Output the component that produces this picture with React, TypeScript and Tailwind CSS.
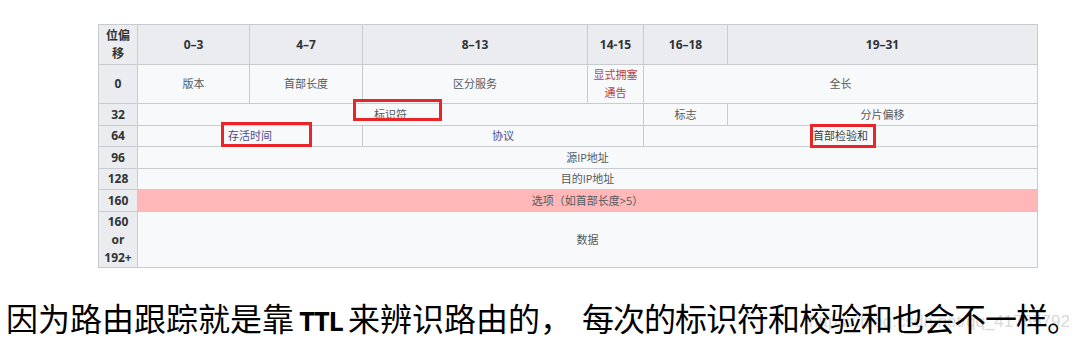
import React from 'react';

const cell = 'border border-[#c8ccd1] bg-[#f8f9fa] text-center align-middle p-0 text-[11px] leading-[18px] text-[#54595d]';
const head = 'border border-[#c8ccd1] bg-[#eaecf0] text-center align-middle p-0 text-[12px] leading-[18px] font-bold text-[#303336]';

const App: React.FC = () => {
  return (
    <div className="relative w-[1074px] h-[344px] bg-white overflow-hidden font-['Open_Sans','Noto_Sans_CJK_SC',sans-serif]">
      {/* IP header table */}
      <div className="pt-[24px] pl-[98px]">
        <table className="table-fixed border-collapse w-[939px]">
          <colgroup>
            <col className="w-[39px]" />
            <col className="w-[112px]" />
            <col className="w-[113px]" />
            <col className="w-[225px]" />
            <col className="w-[56px]" />
            <col className="w-[84px]" />
            <col className="w-[310px]" />
          </colgroup>
          <tbody>
            <tr className="h-[40px]">
              <th className={head}>
                位偏
                <br />
                移
              </th>
              <th className={head}>0–3</th>
              <th className={head}>4–7</th>
              <th className={head}>8–13</th>
              <th className={head}>14-15</th>
              <th className={head}>16–18</th>
              <th className={head}>19–31</th>
            </tr>
            <tr className="h-[39px]">
              <th className={head}>0</th>
              <td className={cell}>版本</td>
              <td className={cell}>首部长度</td>
              <td className={cell}>区分服务</td>
              <td className={`${cell} !text-[#b54545]`}>
                显式拥塞
                <br />
                通告
              </td>
              <td className={cell} colSpan={2}>全长</td>
            </tr>
            <tr className="h-[22px]">
              <th className={head}>32</th>
              <td className={cell} colSpan={4}>标识符</td>
              <td className={cell}>标志</td>
              <td className={cell}>分片偏移</td>
            </tr>
            <tr className="h-[21px]">
              <th className={head}>64</th>
              <td className={`${cell} !text-[#4e4a8e]`} colSpan={2}>存活时间</td>
              <td className={`${cell} !text-[#4e4a8e]`} colSpan={2}>协议</td>
              <td className={`${cell} !text-[#3a3d40]`} colSpan={2}>首部检验和</td>
            </tr>
            <tr className="h-[22px]">
              <th className={head}>96</th>
              <td className={cell} colSpan={6}>源IP地址</td>
            </tr>
            <tr className="h-[21px]">
              <th className={head}>128</th>
              <td className={cell} colSpan={6}>目的IP地址</td>
            </tr>
            <tr className="h-[22px]">
              <th className={head}>160</th>
              <td className={`${cell} !bg-[#ffb7b8]`} colSpan={6}>选项（如首部长度&gt;5）</td>
            </tr>
            <tr className="h-[56px]">
              <th className={head}>
                160
                <br />
                or
                <br />
                192+
              </th>
              <td className={cell} colSpan={6}>数据</td>
            </tr>
          </tbody>
        </table>
      </div>

      {/* red highlight boxes */}
      <div className="absolute left-[353px] top-[99px] w-[89px] h-[22px] border-[3px] border-[#e8262a]" />
      <div className="absolute left-[221px] top-[122px] w-[91px] h-[25px] border-[3px] border-[#e8262a]" />
      <div className="absolute left-[810px] top-[124px] w-[66px] h-[24px] border-[3px] border-[#e8262a]" />

      {/* watermark */}
      <div className="absolute right-[4px] top-[311px] text-[17px] leading-[22px] text-[#dadada] font-['Liberation_Sans',sans-serif]">
        https://blog.csdn.net/qq_41765792
      </div>

      {/* caption */}
      <div className="relative mt-[31px] pl-[6px] text-[32px] leading-[36px] text-black whitespace-nowrap font-['Noto_Sans_CJK_SC',sans-serif]">
        <span>因为路由跟踪就是靠</span>
        <span className="inline-block w-[54px] text-center text-[27px] font-bold tracking-[-1px] font-['Open_Sans',sans-serif]">TTL</span>
        <span>来辨识路由的，</span>
        <span className="ml-[10px] tracking-[-1px]">每次的标识符和校验和也会不一样。</span>
      </div>
    </div>
  );
};

export default App;
